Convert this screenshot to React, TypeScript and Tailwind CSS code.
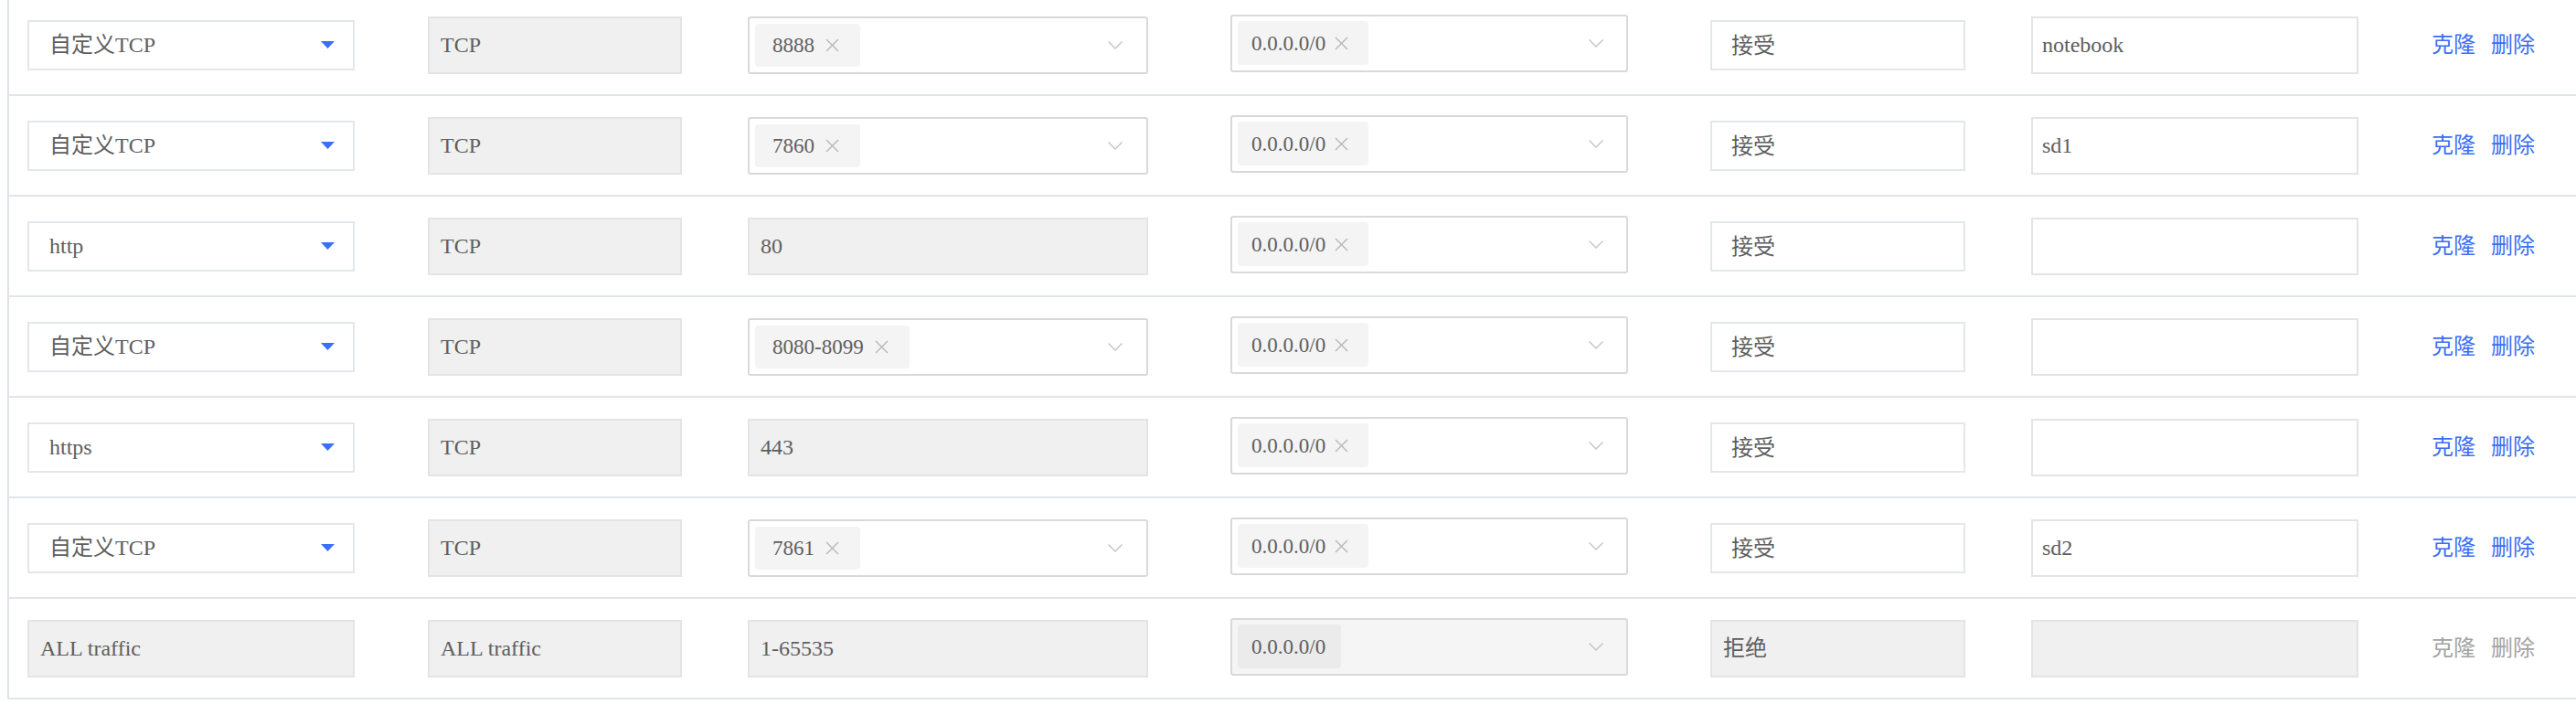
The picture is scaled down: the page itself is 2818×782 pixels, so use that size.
import React from "react";

type Row = {
  type: string;
  proto: string;
  port: string;
  portTag: boolean;
  action: string;
  desc: string;
  disabled?: boolean;
};

const rows: Row[] = [
  { type: "自定义TCP", proto: "TCP", port: "8888", portTag: true, action: "接受", desc: "notebook" },
  { type: "自定义TCP", proto: "TCP", port: "7860", portTag: true, action: "接受", desc: "sd1" },
  { type: "http", proto: "TCP", port: "80", portTag: false, action: "接受", desc: "" },
  { type: "自定义TCP", proto: "TCP", port: "8080-8099", portTag: true, action: "接受", desc: "" },
  { type: "https", proto: "TCP", port: "443", portTag: false, action: "接受", desc: "" },
  { type: "自定义TCP", proto: "TCP", port: "7861", portTag: true, action: "接受", desc: "sd2" },
  { type: "ALL traffic", proto: "ALL traffic", port: "1-65535", portTag: false, action: "拒绝", desc: "", disabled: true },
];

function Triangle() {
  return (
    <svg width="15" height="8" viewBox="0 0 15 8">
      <polygon points="0,0 15,0 7.5,8" fill="#3a6ff7" />
    </svg>
  );
}

function Chevron() {
  return (
    <svg width="16" height="9" viewBox="0 0 16 9" fill="none">
      <polyline points="0.5,0.5 8,8 15.5,0.5" stroke="#c2c2c2" strokeWidth="1.3" />
    </svg>
  );
}

function Cross() {
  return (
    <svg width="15" height="15" viewBox="0 0 15 15" fill="none">
      <line x1="1" y1="1" x2="14" y2="14" stroke="#b8b8b8" strokeWidth="1.4" />
      <line x1="14" y1="1" x2="1" y2="14" stroke="#b8b8b8" strokeWidth="1.4" />
    </svg>
  );
}

function DisabledBox({ text, w }: { text: string; w: string }) {
  return (
    <div className={`${w} h-[63px] flex items-center pl-[12px] bg-[#f0f0f0] border-2 border-[#e4e4e4]`}>
      <span>{text}</span>
    </div>
  );
}

function RuleRow({ r }: { r: Row }) {
  return (
    <div className="h-[110px] border-b-2 border-[#e1e5ea] flex items-center pl-[20px]">
      {r.disabled ? (
        <DisabledBox text={r.type} w="w-[358px]" />
      ) : (
        <div className="w-[358px] h-[55px] flex items-center justify-between pl-[22px] pr-[20px] bg-white border-2 border-[#e4e7ea]">
          <span>{r.type}</span>
          <Triangle />
        </div>
      )}
      <div className="ml-[80px]">
        <DisabledBox text={r.proto} w="w-[278px]" />
      </div>
      <div className="ml-[72px]">
        {r.portTag ? (
          <div className="w-[438px] h-[63px] flex items-center justify-between pl-[6px] pr-[26px] bg-white border-2 border-[#d9d9d9] rounded-[3px]">
            <div className="h-[47px] flex items-center pl-[19px] pr-[23px] bg-[#f4f4f4] rounded-[4px] text-[23px]">
              <span>{r.port}</span>
              <span className="ml-[12px] flex"><Cross /></span>
            </div>
            <Chevron />
          </div>
        ) : (
          <DisabledBox text={r.port} w="w-[438px]" />
        )}
      </div>
      <div className="ml-[90px] mb-[4px]">
        <div
          className={`w-[435px] h-[63px] flex items-center justify-between pl-[6px] pr-[25px] border-2 border-[#d9d9d9] rounded-[3px] ${
            r.disabled ? "bg-[#f5f5f5]" : "bg-white"
          }`}
        >
          <div
            className={`h-[48px] flex items-center pl-[15px] rounded-[4px] text-[23px] ${
              r.disabled ? "bg-[#ebebeb] pr-[17px]" : "bg-[#f4f4f4] pr-[22px]"
            }`}
          >
            <span>0.0.0.0/0</span>
            {!r.disabled && (
              <span className="ml-[10px] flex"><Cross /></span>
            )}
          </div>
          <Chevron />
        </div>
      </div>
      <div className="ml-[90px]">
        {r.disabled ? (
          <DisabledBox text={r.action} w="w-[279px]" />
        ) : (
          <div className="w-[279px] h-[55px] flex items-center pl-[21px] pt-[2px] bg-white border-2 border-[#e4e7ea]">
            <span>{r.action}</span>
          </div>
        )}
      </div>
      <div className="ml-[72px]">
        {r.disabled ? (
          <DisabledBox text="" w="w-[358px]" />
        ) : (
          <div className="w-[358px] h-[63px] flex items-center pl-[10px] bg-white border-2 border-[#e4e4e4]">
            <span>{r.desc}</span>
          </div>
        )}
      </div>
      <div className={`ml-[80px] flex gap-[17px] ${r.disabled ? "text-[#a3a3a3]" : "text-[#3c6ef6]"}`}>
        <span>克隆</span>
        <span>删除</span>
      </div>
    </div>
  );
}

export default function App() {
  return (
    <div className="w-[2818px] h-[782px] overflow-hidden bg-white font-['Liberation_Serif','Noto_Sans_CJK_SC',serif] text-[24px] text-[#5e5e5e] leading-none">
      <div className="-mt-[5px] ml-[8px] border-l-2 border-[#dfe4ea]">
        {rows.map((r, i) => (
          <RuleRow key={i} r={r} />
        ))}
      </div>
    </div>
  );
}
